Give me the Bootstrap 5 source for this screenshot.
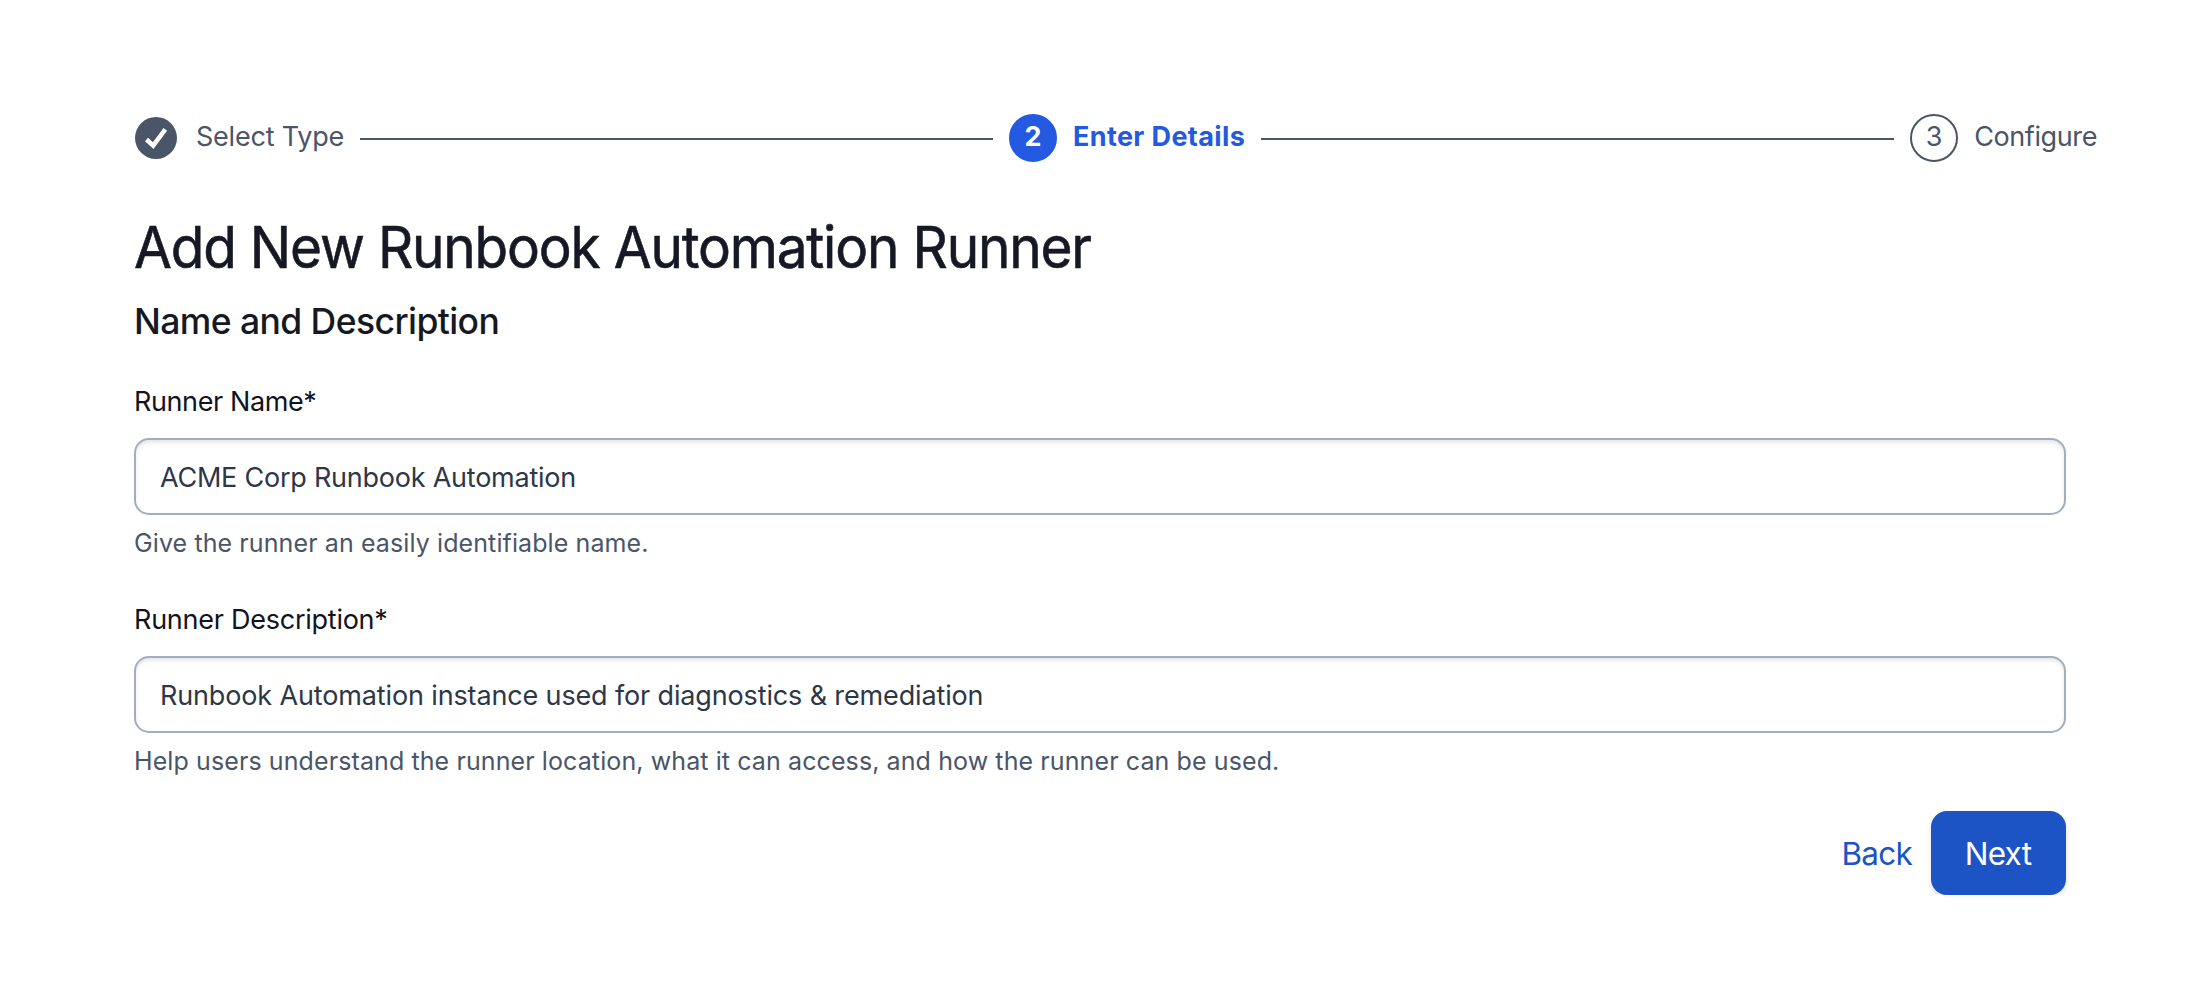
<!DOCTYPE html>
<html lang="en">
<head>
<meta charset="utf-8">
<title>Add New Runbook Automation Runner</title>
<link href="https://cdn.jsdelivr.net/npm/bootstrap@5.3.0/dist/css/bootstrap.min.css" rel="stylesheet">
<style>
body{font-family:Inter,"Liberation Sans",sans-serif;font-size:27px;line-height:40px;color:#161923;background:#fff}
.wizard{padding:114px 105px 0 134px}
.stepper{color:#4a5568;height:48px;margin-left:1px}
.step-text{white-space:nowrap;padding-bottom:2px}
.step-one{letter-spacing:-.22px;margin-left:19px}
.step-two{letter-spacing:.38px;font-weight:700;color:#2459e2}
.step-three{letter-spacing:-.392px}
.step-dot{width:48px;height:48px;padding-bottom:2px;margin-right:16px;border:2px solid #4a5568;letter-spacing:0}
.step-dot.current{background:#2459e2;border-color:#2459e2;color:#fff;font-weight:700}
.step-line{height:2px;background:#4a5568;margin:2px 16px 0}
.form-area{width:1932px}
.page-title{font-size:57.8px;line-height:70px;font-weight:400;margin:50px 0 18px;height:70px}
.page-title span{display:inline-block;white-space:nowrap;transform:scaleX(.95);transform-origin:0 50%;letter-spacing:-1.24px;-webkit-text-stroke:.6px currentColor}
.section-title{font-size:35.5px;line-height:44px;font-weight:500;letter-spacing:-.574px;margin:0 0 38px}
.form-label{margin:0 0 16px;display:block;letter-spacing:-.25px;color:#11141c}
.form-control{height:77px;border:2px solid #a0aec0;border-radius:15px;padding:2px 24px 0;font-size:27px;line-height:40px;color:#2d3748;box-shadow:inset 0 3px 5px -1px rgba(0,0,0,.12)}
.form-text{font-size:25px;line-height:36px;margin:10px 0 39px;color:#4a5568;letter-spacing:.1px}
.actions{margin-top:-7px}
.actions .btn{height:84px;font-size:31.5px;line-height:40px;letter-spacing:-.75px;border:0;border-radius:16px}
.btn-back{color:#1c54c5;padding:2px 19px 0}
.actions .btn-next{width:135px;background:#1c54c5;color:#fff;padding:2px 1px 0 0;box-shadow:0 3px 5px rgba(0,0,0,.13)}
</style>
</head>
<body>
<main class="wizard">
  <div class="stepper d-flex align-items-center">
    <svg class="flex-shrink-0" width="42" height="42" viewBox="0 0 42 42"><circle cx="21" cy="21" r="21" fill="#4a5568"/><path d="M11.5 22.5 18.2 28.6 30.3 12.4" fill="none" stroke="#fff" stroke-width="4.5"/></svg>
    <span class="step-text step-one">Select Type</span>
    <div class="step-line flex-fill"></div>
    <span class="step-dot current rounded-circle d-flex align-items-center justify-content-center flex-shrink-0">2</span>
    <span class="step-text step-two">Enter Details</span>
    <div class="step-line flex-fill"></div>
    <span class="step-dot rounded-circle d-flex align-items-center justify-content-center flex-shrink-0">3</span>
    <span class="step-text step-three">Configure</span>
  </div>
  <form class="form-area">
    <h1 class="page-title"><span>Add New Runbook Automation Runner</span></h1>
    <h2 class="section-title">Name and Description</h2>
    <label class="form-label" for="runner-name" style="letter-spacing:-.39px">Runner Name*</label>
    <input class="form-control" id="runner-name" type="text" value="ACME Corp Runbook Automation" style="letter-spacing:-.234px">
    <div class="form-text">Give the runner an easily identifiable name.</div>
    <label class="form-label" for="runner-desc">Runner Description*</label>
    <input class="form-control" id="runner-desc" type="text" value="Runbook Automation instance used for diagnostics &amp; remediation" style="letter-spacing:-.14px">
    <div class="form-text">Help users understand the runner location, what it can access, and how the runner can be used.</div>
    <div class="actions d-flex justify-content-end">
      <button type="button" class="btn btn-back">Back</button>
      <button type="button" class="btn btn-next">Next</button>
    </div>
  </form>
</main>
<script src="https://cdn.jsdelivr.net/npm/bootstrap@5.3.0/dist/js/bootstrap.bundle.min.js"></script>
</body>
</html>
